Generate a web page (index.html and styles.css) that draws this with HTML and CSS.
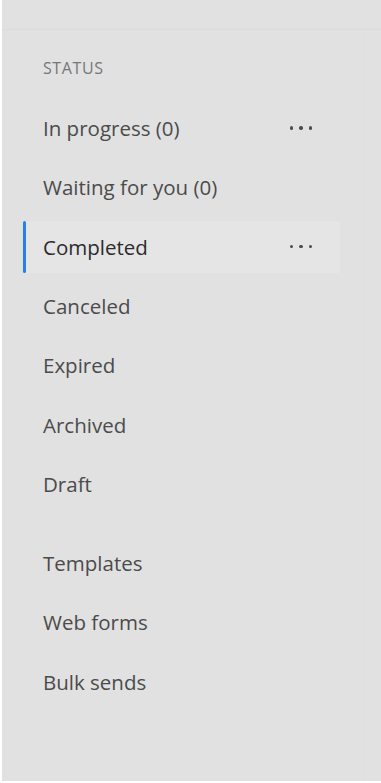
FILE: index.html
```html
<!DOCTYPE html>
<html>
<head>
<meta charset="utf-8">
<title>Agreements</title>
<link rel="stylesheet" href="styles.css">
</head>
<body>
<div class="side_panel">
	<div class="panel_top"></div>
	<div class="panel_body">
		<div class="nav_list">
			<h2 class="nav_heading">STATUS</h2>
			<div class="nav_item">
				<span class="nav_label">In progress (0)</span>
				<span class="more_dots"><i></i><i></i><i></i></span>
			</div>
			<div class="nav_item">
				<span class="nav_label">Waiting for you (0)</span>
			</div>
			<div class="nav_item selected">
				<span class="nav_label">Completed</span>
				<span class="more_dots"><i></i><i></i><i></i></span>
			</div>
			<div class="nav_item"><span class="nav_label">Canceled</span></div>
			<div class="nav_item"><span class="nav_label">Expired</span></div>
			<div class="nav_item"><span class="nav_label">Archived</span></div>
			<div class="nav_item"><span class="nav_label">Draft</span></div>

			<div class="nav_group">
				<div class="nav_item"><span class="nav_label">Templates</span></div>
				<div class="nav_item"><span class="nav_label">Web forms</span></div>
				<div class="nav_item"><span class="nav_label">Bulk sends</span></div>
			</div>
		</div>
	</div>
</div>
</body>
</html>
```

FILE: styles.css
```css
html, body {
	margin: 0;
	padding: 0;
	background: #ffffff;
}
body {
	font-family: "Open Sans", "Noto Sans", sans-serif;
}
.side_panel {
	margin-left: 2px;
	width: 379px;
	height: 781px;
	background: #e1e1e1;
	display: flex;
	flex-direction: column;
}
.panel_top {
	height: 30px;
	border-bottom: 1px solid #dbdbdb;
	box-sizing: border-box;
}
.panel_body {
	flex: 1;
	display: flex;
}
.nav_list {
	width: 362px;
	border-right: 1px solid #dfdfdf;
	padding: 28px 0 0 22px;
	box-sizing: border-box;
}
.nav_heading {
	margin: 0 0 24px 19px;
	height: 20px;
	line-height: 20px;
	font-size: 16px;
	font-weight: normal;
	letter-spacing: 0.6px;
	color: #777777;
}
.nav_item {
	position: relative;
	display: flex;
	align-items: center;
	justify-content: space-between;
	width: 316px;
	height: 52px;
	margin-bottom: 7.33px;
	padding: 0 28px 0 19px;
	box-sizing: border-box;
	border-radius: 2px;
}
.nav_label {
	font-size: 20.5px;
	color: #4b4b4b;
}
.nav_item.selected {
	background: #e5e5e5;
}
.nav_item.selected .nav_label {
	color: #2c2c2c;
}
.nav_item.selected::before {
	content: "";
	position: absolute;
	left: -1px;
	top: 0;
	width: 3px;
	height: 52px;
	border-radius: 2px;
	background: #2680eb;
}
.nav_group {
	margin-top: 27px;
}
.more_dots {
	display: flex;
	gap: 6px;
}
.more_dots i {
	display: block;
	width: 3.5px;
	height: 3.5px;
	border-radius: 50%;
	background: #4b4b4b;
}
```
